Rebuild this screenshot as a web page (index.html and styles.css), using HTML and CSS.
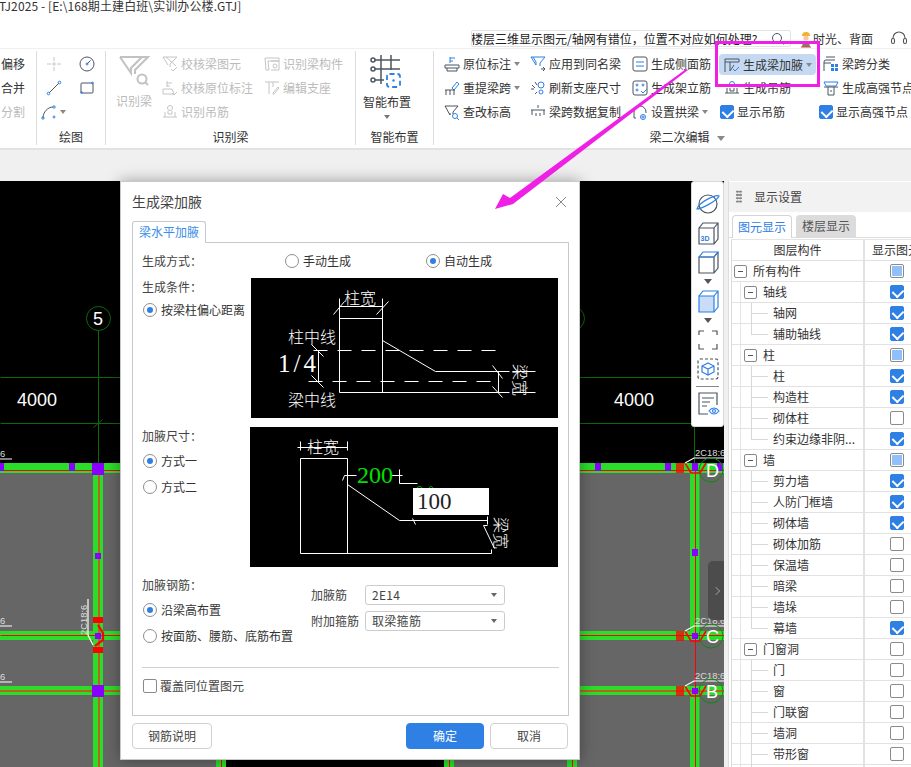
FILE: index.html
```html
<!DOCTYPE html>
<html lang="zh-CN">
<head>
<meta charset="utf-8">
<title>生成梁加腋</title>
<link rel="stylesheet" href="styles.css">
</head>
<body>
<div class="app">
  <header class="titlebar">
    <div class="title">TJ2025 - [E:\168期土建白班\实训办公楼.GTJ]</div>
    <div class="topline">
      <div class="search"><span class="search-text">楼层三维显示图元/轴网有错位，位置不对应如何处理?</span>
        <svg class="ic search-ic" viewBox="0 0 16 16"><circle cx="7" cy="7" r="4.5"/><path d="M10.5 10.5l3 3"/></svg>
      </div>
      <svg class="avatar" viewBox="0 0 12 18"><path d="M2 6a4 4 0 0 1 8 0z" fill="#f0b030"/><circle cx="6" cy="8" r="2.6" fill="#f3c9a0"/><path d="M2 17l1-6h6l1 6z" fill="#8d7b68"/><path d="M1 17h10" stroke="#c44" stroke-width="1"/></svg>
      <span class="user">时光、背面</span>
      <svg class="headset" viewBox="0 0 18 18"><path d="M3 10V8a6 6 0 0 1 12 0v2"/><rect x="1.5" y="8.5" width="3" height="5" rx="1.4"/><rect x="13.5" y="8.5" width="3" height="5" rx="1.4"/></svg>
    </div>
  </header>

  <section class="ribbon">
    <div class="group g1">
      <div class="body col-text">
        <div class="item">偏移</div>
        <div class="item">合并</div>
        <div class="item off">分割</div>
      </div>
      <div class="label"></div>
    </div>

    <div class="group g2">
      <div class="body draw-grid">
        <span class="cell"><svg class="ic" viewBox="0 0 16 16"><path class="grey" d="M8 1v4M8 11v4M1 8h4M11 8h4"/><circle class="grey" cx="8" cy="8" r="1.2"/></svg></span>
        <span class="cell"><svg class="ic big16" viewBox="0 0 16 16"><circle cx="8" cy="8" r="7"/><path d="M8 8l3.5-3.5"/><circle class="b" cx="8" cy="8" r="1"/></svg></span>
        <span class="cell"><svg class="ic" viewBox="0 0 16 16"><path d="M3 13L13 3"/><circle class="b" cx="2.5" cy="13.5" r="1.3"/><circle class="b" cx="13.5" cy="2.5" r="1.3"/></svg></span>
        <span class="cell"><svg class="ic" viewBox="0 0 16 16"><rect x="2" y="3" width="12" height="10" rx="1"/><circle class="b" cx="13.5" cy="3" r=".9"/><circle class="b" cx="2.5" cy="12.5" r=".9"/></svg></span>
        <span class="cell"><svg class="ic" viewBox="0 0 16 16"><path d="M2 14C2 8 7 3 12 3"/><circle class="b" cx="2" cy="14" r="1.2"/><circle class="b" cx="13" cy="3" r="1.2"/><circle class="b" cx="13" cy="13" r="1"/></svg><i class="caret"></i></span>
      </div>
      <div class="label">绘图</div>
    </div>

    <div class="group g3">
      <div class="body row-cols">
        <div class="bigcol off w56">
          <svg class="bigicon" viewBox="0 0 32 32"><path class="grey2" d="M2 2h28L17 15v4M2 2l11 16v-5L24 2M13 13v5"/><circle class="grey2" cx="24" cy="24" r="4.5"/><path class="grey2" d="M27 27l3 3"/></svg>
          <span>识别梁</span>
        </div>
        <div class="col w102 off">
          <div class="item"><svg class="ic grey" viewBox="0 0 16 16"><path d="M1 1h14L8 8v3M1 1l5 8M4 1l10 9M9 13l2 2 4-4"/></svg>校核梁图元</div>
          <div class="item"><svg class="ic grey" viewBox="0 0 16 16"><path d="M5 1v6M5 3h5M5 6h3M1 9h9l2 5H1zM10 13l2 2 3-3"/></svg>校核原位标注</div>
          <div class="item"><svg class="ic grey" viewBox="0 0 16 16"><circle cx="8" cy="4" r="2.5"/><path d="M1 13h14M3 13V8M13 13V8M6 7v3h4V7"/></svg>识别吊筋</div>
        </div>
        <div class="col off">
          <div class="item"><svg class="ic grey" viewBox="0 0 16 16"><path d="M1 2h14v3H4l1 9H2zM7 5h8v9H7"/><circle cx="11" cy="10" r="2"/></svg>识别梁构件</div>
          <div class="item"><svg class="ic grey" viewBox="0 0 16 16"><path d="M1 2h14M5 2v12M9 2v5M9 13l5-6 1 1-5 6H9z"/></svg>编辑支座</div>
        </div>
      </div>
      <div class="label">识别梁</div>
    </div>

    <div class="group g4">
      <div class="body">
        <div class="bigcol w62">
          <svg class="bigicon tall" viewBox="0 0 32 33"><g class="grid-lines"><circle cx="3" cy="5" r="2"/><circle cx="3" cy="14" r="2"/><circle cx="3" cy="25" r="2"/><path d="M5 5h25M5 14h25M5 25h9M11 0v29M21 0v15"/></g><rect class="dash" x="17" y="19" width="13" height="13" rx="2.5"/><circle cx="23.5" cy="25.5" r="1.2" fill="#2f80e4"/></svg>
          <span>智能布置</span>
          <i class="caret down"></i>
        </div>
      </div>
      <div class="label">智能布置</div>
    </div>

    <div class="group g5">
      <div class="body row-cols">
        <div class="col w86">
          <div class="item"><svg class="ic" viewBox="0 0 16 16"><path class="b" d="M6 1v6M6 2h5M6 5h3"/><path d="M1 9h14v3H1zM3 12v3h10v-3"/></svg>原位标注<i class="caret"></i></div>
          <div class="item"><svg class="ic" viewBox="0 0 16 16"><path class="b" d="M8 8l5-6 2 2-5 6z"/><path d="M1 10h10M2 10v5M10 10v5M6 10v5"/></svg>重提梁跨<i class="caret"></i></div>
          <div class="item"><svg class="ic" viewBox="0 0 16 16"><path d="M1 2h13L9 8v2M1 2l5 9v-2"/><circle class="b" cx="11" cy="12" r="2.5"/><path class="b" d="M13 14l2 2"/></svg>查改标高</div>
        </div>
        <div class="col w102">
          <div class="item"><svg class="ic" viewBox="0 0 16 16"><path class="b" d="M1 1h14l-5 6v3M1 1l5 8v-3"/><path class="b" d="M3 1l3 5"/><path d="M11 13h4M13 11l2 2-2 2"/></svg>应用到同名梁</div>
          <div class="item"><svg class="ic" viewBox="0 0 16 16"><path d="M2 5l3 3M5 2l2 3M1 9h3M7 12l-2 2"/><circle class="b" cx="11" cy="5" r="3"/><circle class="b" cx="11" cy="12" r="2"/></svg>刷新支座尺寸</div>
          <div class="item"><svg class="ic" viewBox="0 0 16 16"><path d="M1 6h14M8 1v3M2 6v5M14 6v5M6 9v3M10 9v3"/></svg>梁跨数据复制</div>
        </div>
        <div class="col w87">
          <div class="item"><svg class="ic" viewBox="0 0 16 16"><rect x="1" y="1" width="14" height="14" rx="2"/><path class="b" d="M4 6h8M4 10h8"/></svg>生成侧面筋</div>
          <div class="item"><svg class="ic" viewBox="0 0 16 16"><rect x="1" y="1" width="14" height="14" rx="2"/><g class="bdots"><circle cx="5" cy="5" r="1"/><circle cx="11" cy="5" r="1"/><circle cx="5" cy="10" r="1"/></g><path class="b" d="M9 11l2 2 4-4"/></svg>生成架立筋</div>
          <div class="item"><svg class="ic" viewBox="0 0 16 16"><path d="M2 14V8a6 6 0 0 1 12 0v1M2 14h2"/><circle class="b" cx="11" cy="13" r="2.5"/><circle class="b" cx="11" cy="13" r="1"/></svg>设置拱梁<i class="caret"></i></div>
        </div>
        <div class="col w99">
          <div class="item hl"><svg class="ic" viewBox="0 0 16 16"><path d="M1 2h14v3H1zM1 5v10M6 5v9l4-6"/><path class="b" d="M9 12l2 2 4-4"/></svg>生成梁加腋<i class="caret"></i></div>
          <div class="item pad5"><svg class="ic" viewBox="0 0 16 16"><circle class="b" cx="8" cy="4" r="2.5"/><path d="M1 13h14M3 13V8M13 13V8M6 8v3h4V8"/></svg>生成吊筋</div>
          <div class="item chk"><span class="cb on"></span>显示吊筋</div>
        </div>
        <div class="col">
          <div class="item pad5"><svg class="ic" viewBox="0 0 16 16"><path d="M1 15V6a2 2 0 0 1 2-2h9M1 7h7M3 1h9"/><path class="bfill" d="M8 8h3v3H8zM12 8h3v3h-3zM8 12h3v3H8zM12 12h3v3h-3z"/></svg>梁跨分类</div>
          <div class="item pad5"><svg class="ic" viewBox="0 0 16 16"><path class="b" d="M1 2h14l-2 4H3z"/><path d="M1 7h14M5 7v8h6V7M7 11h2"/></svg>生成高强节点</div>
          <div class="item chk"><span class="cb on"></span>显示高强节点</div>
        </div>
      </div>
      <div class="label">梁二次编辑<i class="caret big"></i></div>
    </div>
  </section>

  <div class="strip"></div>

  <main class="workspace">
    <div class="canvas">
      <svg class="cad" viewBox="0 181 724 586" preserveAspectRatio="none">
        <rect x="0" y="181" width="724" height="282" fill="#000"/>
        <rect x="0" y="463" width="724" height="304" fill="#666"/>
        <rect x="226" y="745" width="218" height="22" fill="#000"/>

        <g class="axis-thin" transform="translate(.5 .5)">
          <path d="M0 377H692M0 423H692M98 330V463M694 330V463M93 427l9-8M691 427l7-7"/>
          <circle cx="98" cy="318" r="12"/><circle cx="704" cy="318" r="12"/><circle cx="572" cy="318" r="12"/>
        </g>
        <text class="cad-num" x="17" y="406">4000</text>
        <text class="cad-num" x="614" y="406">4000</text>
        <text class="axis-label" x="93" y="325">5</text>

        <g class="beam">
          <rect x="0" y="463" width="724" height="10"/>
          <rect x="0" y="631" width="724" height="9"/>
          <rect x="0" y="686" width="724" height="9"/>
          <rect x="93" y="463" width="10" height="304"/>
          <rect x="690" y="463" width="9.500" height="177"/>
          <rect x="690" y="686" width="9.500" height="81"/>
          <rect x="216" y="686" width="10" height="81"/>
          <rect x="444" y="686" width="10" height="81"/>
          <rect x="567" y="686" width="10" height="81"/>
        </g>
        <path class="red" transform="translate(.5 .5)" d="M0 470H724M0 635H724M695 463V767M221 740V767M449 740V767M572 740V767"/>
        <path class="brown" d="M0 691H724M99 473V767"/>

        <g class="purple">
          <rect x="0" y="463" width="4" height="8"/><rect x="69" y="463" width="6" height="8"/>
          <rect x="92" y="463" width="12" height="12"/><rect x="95" y="553" width="6" height="6"/>
          <rect x="95" y="633" width="6" height="6"/><rect x="92" y="685" width="12" height="12"/>
          <rect x="595" y="463" width="6" height="8"/><rect x="665" y="463" width="6" height="8"/>
          <rect x="692" y="463" width="6" height="8"/><rect x="717" y="463" width="6" height="8"/>
          <rect x="692" y="549" width="6" height="7"/><rect x="692" y="633" width="6" height="6"/>
          <rect x="692" y="688" width="6" height="6"/>
        </g>

        <path class="leader" d="M0 459H12M0 626H12M0 682H12M88 599V635L93 645"/>
        <text class="dim-small" x="0" y="457">6</text>
        <text class="dim-small" x="0" y="624">6</text>
        <text class="dim-small" x="0" y="680">6</text>
        <text class="dim-small" transform="translate(87 635) rotate(-90)">2C18:6</text>
        <path class="rebar thick" d="M93 618H103M93 620H103M93 622H103M93 648H103M93 650H103M93 652H103M98 625L103 633V640L95 646"/>

        <g class="junction">
          <path class="rebar" d="M677 463V473M679 463V473M681 463V473M683 463V473M685 463L691 473H700L706 463"/>
          <path class="leader" d="M685 463L694 458H724"/>
          <text class="dim-small" x="695" y="456">2C18:6</text>
          <circle class="axis-c" cx="711" cy="470" r="12"/>
          <text class="axis-letter" x="706" y="477">D</text>
        </g>
        <g class="junction">
          <path class="rebar" d="M677 631V641M679 631V641M681 631V641M683 631V641M685 631L691 641H700L706 631"/>
          <path class="leader" d="M685 631L694 626H724"/>
          <text class="dim-small" x="695" y="624">2C18:6</text>
          <circle class="axis-c" cx="711" cy="636" r="12"/>
          <text class="axis-letter" x="706" y="643">C</text>
        </g>
        <g class="junction">
          <path class="rebar" d="M677 686V696M679 686V696M681 686V696M683 686V696M685 686L691 696H700L706 686"/>
          <path class="leader" d="M685 686L694 681H724"/>
          <text class="dim-small" x="695" y="679">2C18:6</text>
          <circle class="axis-c" cx="711" cy="691" r="12"/>
          <text class="axis-letter" x="706" y="698">B</text>
        </g>
      </svg>
      <div class="collapse-tab"><i class="chev"></i></div>
    </div>

    <aside class="panel">
      <div class="panel-head"><span class="grip"></span>显示设置</div>
      <div class="tabs">
        <span class="ptab active">图元显示</span>
        <span class="ptab">楼层显示</span>
      </div>
      <div class="table">
        <div class="row head"><div class="tree">图层构件</div><div class="vis">显示图元</div></div>
        <div class="row lv0"><div class="tree"><i class="exp"></i>所有构件</div><div class="vis"><span class="cb part"></span></div></div>
        <div class="row lv1"><div class="tree"><i class="exp"></i>轴线</div><div class="vis"><span class="cb on"></span></div></div>
        <div class="row lv2"><div class="tree">轴网</div><div class="vis"><span class="cb on"></span></div></div>
        <div class="row lv2 last"><div class="tree">辅助轴线</div><div class="vis"><span class="cb on"></span></div></div>
        <div class="row lv1"><div class="tree"><i class="exp"></i>柱</div><div class="vis"><span class="cb part"></span></div></div>
        <div class="row lv2"><div class="tree">柱</div><div class="vis"><span class="cb on"></span></div></div>
        <div class="row lv2"><div class="tree">构造柱</div><div class="vis"><span class="cb on"></span></div></div>
        <div class="row lv2"><div class="tree">砌体柱</div><div class="vis"><span class="cb"></span></div></div>
        <div class="row lv2 last"><div class="tree">约束边缘非阴...</div><div class="vis"><span class="cb on"></span></div></div>
        <div class="row lv1"><div class="tree"><i class="exp"></i>墙</div><div class="vis"><span class="cb part"></span></div></div>
        <div class="row lv2"><div class="tree">剪力墙</div><div class="vis"><span class="cb on"></span></div></div>
        <div class="row lv2"><div class="tree">人防门框墙</div><div class="vis"><span class="cb on"></span></div></div>
        <div class="row lv2"><div class="tree">砌体墙</div><div class="vis"><span class="cb on"></span></div></div>
        <div class="row lv2"><div class="tree">砌体加筋</div><div class="vis"><span class="cb"></span></div></div>
        <div class="row lv2"><div class="tree">保温墙</div><div class="vis"><span class="cb"></span></div></div>
        <div class="row lv2"><div class="tree">暗梁</div><div class="vis"><span class="cb"></span></div></div>
        <div class="row lv2"><div class="tree">墙垛</div><div class="vis"><span class="cb"></span></div></div>
        <div class="row lv2 last"><div class="tree">幕墙</div><div class="vis"><span class="cb on"></span></div></div>
        <div class="row lv1"><div class="tree"><i class="exp"></i>门窗洞</div><div class="vis"><span class="cb"></span></div></div>
        <div class="row lv2"><div class="tree">门</div><div class="vis"><span class="cb"></span></div></div>
        <div class="row lv2"><div class="tree">窗</div><div class="vis"><span class="cb"></span></div></div>
        <div class="row lv2"><div class="tree">门联窗</div><div class="vis"><span class="cb"></span></div></div>
        <div class="row lv2"><div class="tree">墙洞</div><div class="vis"><span class="cb"></span></div></div>
        <div class="row lv2"><div class="tree">带形窗</div><div class="vis"><span class="cb"></span></div></div>
        <div class="row lv2"><div class="tree"></div><div class="vis"></div></div>
      </div>
    </aside>
  </main>

  <div class="viewbar">
    <svg class="vb" viewBox="0 0 24 24"><circle class="st" cx="12" cy="12" r="9"/><path class="sb" d="M1 17C5 17 21 9 23 4 20 2 3 10 1 17z"/></svg>
    <svg class="vb" viewBox="0 0 24 24"><path class="st" d="M3 7h15v16H3zM3 7l4-5h15v16l-4 5M18 7l4-5"/><text class="t3d" x="4.500" y="20">3D</text></svg>
    <svg class="vb" viewBox="0 0 24 24"><path class="st" d="M3 7h15v16H3zM18 23l4-5V2M18 7l4-5"/><path class="sb" d="M3 7l4-5h15l-4 5z"/></svg>
    <i class="vb-caret"></i>
    <svg class="vb" viewBox="0 0 24 24"><path class="sb solid" d="M3 7h15v16H3z"/><path class="sb" d="M3 7l4-5h15v16l-4 5M18 7l4-5"/></svg>
    <i class="vb-caret"></i>
    <svg class="vb" viewBox="0 0 24 24"><path class="st" d="M3 7V3h5M16 3h5v4M21 16v5h-5M8 21H3v-5"/></svg>
    <svg class="vb" viewBox="0 0 24 24"><rect class="st dash2" x="2" y="2" width="20" height="20" rx="2"/><path class="sb" d="M12 6l6 3v6l-6 3-6-3V9zM6 9l6 3 6-3M12 12v6"/></svg>
    <span class="vb-rule"></span>
    <svg class="vb" viewBox="0 0 24 24"><path class="st" d="M21 14V2H3v21h9M6 7h12M6 11h8M6 15h5"/><path class="sb" d="M13 20c3-4 7-4 10 0-3 4-7 4-10 0z"/><circle class="sb" cx="18" cy="20" r="1.500"/></svg>
  </div>

  <div class="dialog">
    <div class="dlg-head"><span class="dlg-title">生成梁加腋</span><svg class="close" viewBox="0 0 12 12"><path d="M1 1l10 10M11 1L1 11"/></svg></div>
    <div class="dlg-tab">梁水平加腋</div>
    <div class="dlg-box">
      <div class="method">
        <span class="lbl w143">生成方式：</span>
        <label class="radio w141"><i class="rd"></i>手动生成</label>
        <label class="radio"><i class="rd on"></i>自动生成</label>
      </div>

      <div class="sect s1">
        <div class="sect-left">
          <div class="lbl">生成条件：</div>
          <label class="radio r-first"><i class="rd on"></i>按梁柱偏心距离</label>
        </div>
        <svg class="diagram" viewBox="0 0 307 140">
          <g class="cadline" transform="translate(.5 .5)">
            <path d="M88 40H131M88 20V114M131 20V114M88 28H131M82 36L93 23M125 36L137 23"/>
            <path d="M131 62L184 93H258M88 114H258M67 72V103M60 66L72 78M60 97L72 109"/>
            <path class="dashed" d="M62 72H253M57 103H241"/>
            <path d="M247 93V114M241 87L251 100M241 108L251 119M261 93H284M261 114H284"/>
          </g>
          <text class="cadtxt" x="93" y="26">柱宽</text>
          <text class="cadtxt" x="37" y="65">柱中线</text>
          <text class="cadfrac" x="27" y="94">1/4</text>
          <text class="cadtxt" x="37" y="128">梁中线</text>
          <text class="cadtxt side" transform="translate(263 86) rotate(90)">梁宽</text>
        </svg>
      </div>

      <div class="sect s2">
        <div class="sect-left lm">
          <div class="lbl">加腋尺寸：</div>
          <label class="radio r-first2"><i class="rd on"></i>方式一</label>
          <label class="radio r-next"><i class="rd"></i>方式二</label>
        </div>
        <svg class="diagram" viewBox="0 0 308 140">
          <g class="cadline" transform="translate(.5 .5)">
            <path d="M50 31H97M50 31V126M97 31V126M50 20H97M50 14V23M97 14V23M47 20h3"/>
            <path d="M97 57L149 93H237M50 126H241M241 126V122M237 89V97M233 98H237M233 98L244 121"/>
            <path d="M94 48H106M141 48H152M149 42V56H167M94 48l-2 5M162 91l3 6"/>
          </g>
          <text class="cadtxt" x="57" y="26">柱宽</text>
          <text class="cadgreen" x="107" y="56">200</text>
          <path class="greenarc" d="M167 61c1-2 4-2 5 0M183 61c-1-2-3-2-4 0"/>
          <rect x="163" y="61" width="76" height="27" fill="#fff"/>
          <text class="cadbox" x="167" y="82">100</text>
          <text class="cadtxt side" transform="translate(245 90) rotate(90)">梁宽</text>
        </svg>
      </div>

      <div class="sect s3">
        <div class="sect-left wide">
          <div class="lbl">加腋钢筋：</div>
          <label class="radio r-first3"><i class="rd on"></i>沿梁高布置</label>
          <label class="radio r-next"><i class="rd"></i>按面筋、腰筋、底筋布置</label>
        </div>
        <div class="fields">
          <div class="field"><span class="field-lbl">加腋筋</span><span class="select">2E14<i class="caret"></i></span></div>
          <div class="field"><span class="field-lbl">附加箍筋</span><span class="select">取梁箍筋<i class="caret"></i></span></div>
        </div>
      </div>

      <div class="rule"></div>
      <label class="cover"><span class="cb sq"></span>覆盖同位置图元</label>
    </div>
    <div class="dlg-foot">
      <button class="btn w80">钢筋说明</button>
      <span class="spacer"></span>
      <button class="btn primary w78">确定</button>
      <button class="btn w78">取消</button>
    </div>
  </div>

  <div class="callout"></div>
  <svg class="arrow" viewBox="0 0 911 767"><polygon points="688,70 513,204 495,209 503,194 510,198 686,69"/></svg>
</div>
</body>
</html>
```

FILE: styles.css
```css
* { box-sizing: border-box; }
html, body { margin: 0; padding: 0; }
body {
  width: 911px; height: 767px; overflow: hidden; background: #fff;
  font: 12px/16px "Noto Sans CJK SC", "Liberation Sans", sans-serif; color: #333;
}
i { font-style: normal; display: inline-block; }
.app { position: relative; width: 911px; height: 767px; overflow: hidden; display: flex; flex-direction: column; }

/* title bar */
.titlebar { height: 48px; flex: none; padding-top: 0; background: #fff; }
.title { height: 30px; line-height: 12px; letter-spacing: .1px; white-space: nowrap; margin-left: -1px; }
.topline { display: flex; align-items: center; height: 17px; padding-left: 471px; }
.search {
  width: 320px; height: 17px; border: 1px solid #e3e3e3; border-radius: 2px; display: flex; align-items: center;
  justify-content: space-between; overflow: hidden; padding-right: 4px; margin-right: 9px;
}
.search-text { color: #222; white-space: nowrap; line-height: 15px; margin-left: -1px; }
.search-ic { width: 12px; height: 12px; flex: none; stroke: #aaa; }
.avatar { width: 12px; height: 18px; flex: none; }
.user { margin-left: 1px; width: 77px; color: #333; }
.headset { width: 18px; height: 18px; flex: none; fill: #fff; stroke: #555; stroke-width: 1.100; }

/* ribbon */
.ribbon {
  height: 102px; flex: none; display: flex; padding-top: 2px; background: #fff;
  border-top: 1px solid #f0f0f0; border-bottom: 2px solid #e2e2e2; overflow: hidden;
}
.group { height: 94px; flex: none; border-right: 1px solid #dcdcdc; display: flex; flex-direction: column; }
.g1 { width: 37px; }
.g2 { width: 69px; }
.g3 { width: 250px; }
.g4 { width: 78px; }
.g5 { width: 496px; border-right: 0; padding-left: 10px; }
.body { height: 79px; flex: none; padding-top: 1px; display: flex; }
.col-text { flex-direction: column; padding-left: 1px; }
.label { height: 15px; line-height: 14px; text-align: center; white-space: nowrap; color: #333; }
.item { height: 24px; display: flex; align-items: center; white-space: nowrap; color: #333; gap: 3px; }
.off, .off .item { color: #bbb; }
.row-cols { flex-direction: row; }
.col { display: flex; flex-direction: column; }
.w56 { width: 56px; } .w62 { width: 62px; }
.w86 { width: 86px; } .w87 { width: 87px; } .w99 { width: 99px; } .w102 { width: 102px; }
.bigcol { display: flex; flex-direction: column; align-items: center; padding-top: 3px; }
.bigcol span { margin-top: 6px; }
.bigicon { width: 32px; height: 32px; fill: none; }
.bigicon.tall { height: 33px; margin-left: -2px; }
.bigcol span { line-height: 16px; }
.grey2 { stroke: #c2c2c2; stroke-width: 2; fill: none; }
.grid-lines { stroke: #4b5563; stroke-width: 1.500; fill: none; }
.dash { stroke: #2f80e4; stroke-width: 1.800; stroke-dasharray: 5 3; fill: none; }

.ic { width: 16px; height: 16px; flex: none; fill: none; stroke: #4b5563; stroke-width: 1; }
.ic .b, .b { stroke: #2f80e4; fill: none; }
.ic.grey, .ic .grey { stroke: #c4c4c4; }
.bdots { stroke: #2f80e4; }
.bfill { fill: #2f80e4; stroke: none; }

.draw-grid { display: grid; grid-template-columns: 33px 33px; grid-auto-rows: 24px; padding: 1px 0 0 0; margin-left: 0; align-content: start; }
.cell { display: flex; align-items: center; justify-content: center; gap: 3px; position: relative; }
.big16 { width: 16px; height: 16px; }

.caret { width: 0; height: 0; border: 3px solid transparent; border-top: 4px solid #888; border-bottom: 0; flex: none; }
.caret.down { margin: 5px 0 0; border-top-color: #777; }
.caret.big { margin-left: 7px; border-width: 4px; border-top-width: 5px; border-bottom: 0; vertical-align: 1px; }
.hl { width: 97px; height: 21px; margin: 2px 0 1px; padding-left: 5px; background: #c5daf2; border-radius: 4px; }
.pad5 { padding-left: 5px; }
.chk { padding-left: 1px; gap: 3px; }

/* shared checkbox */
.cb { width: 14px; height: 14px; flex: none; display: inline-block; position: relative; border: 1px solid #8a8a8a; border-radius: 2px; background: #fff; }
.cb.on { background: #2f80e4; border-color: #2f80e4; }
.cb.on::after {
  content: ""; position: absolute; left: 3px; top: 1px; width: 6px; height: 8px;
  border: solid #fff; border-width: 0 2px 2px 0; transform: rotate(45deg);
}
.cb.part::after { content: ""; position: absolute; inset: 1px; background: #90c0fb; }

.strip { height: 31px; flex: none; background: #f0f0f0; }

/* workspace */
.workspace { flex: 1; display: flex; min-height: 0; background: #f0f0f0; }
.canvas { width: 724px; flex: none; position: relative; overflow: hidden; }
.cad { display: block; width: 724px; height: 586px; }
.axis-thin { stroke: #0a6a0a; stroke-width: 1; fill: none; }
.cad-num { font: 18px "Liberation Sans", sans-serif; fill: #fff; }
.axis-label { font: 18px "Liberation Sans", sans-serif; fill: #fff; }
.beam rect { fill: #2bdc2b; }
.red { stroke: #f00; stroke-width: 1; fill: none; }
.brown { stroke: #b5651d; stroke-width: 2; fill: none; }
.purple rect { fill: #8a00ff; }
.leader { stroke: #fff; stroke-width: 1.200; fill: none; }
.dim-small { font: 9.400px "Liberation Sans", sans-serif; fill: #ddd; }
.rebar { stroke: #f00; stroke-width: 1.500; fill: none; }
.rebar.thick { stroke-width: 2.200; }
.axis-c { fill: none; stroke: #0f8a0f; stroke-width: 1; }
.axis-letter { font: 18px "Liberation Sans", sans-serif; fill: #fff; }
.collapse-tab {
  position: absolute; right: 0; top: 380px; width: 16px; height: 59px;
  background: #4c4c4c; border-radius: 5px 0 0 5px; display: flex; align-items: center; justify-content: center;
}
.chev { width: 6px; height: 6px; border: solid #8a8a8a; border-width: 1px 1px 0 0; transform: rotate(45deg); }

/* right panel */
.panel { flex: 1; margin-left: 4px; background: #fff; border-left: 1px solid #dedede; overflow: hidden; padding-top: 1px; }
.panel-head { height: 30px; background: #f2f2f2; display: flex; align-items: center; padding-left: 25px; position: relative; color: #444; }
.grip {
  position: absolute; left: 7px; top: 8px; width: 6px; height: 13px;
  background: radial-gradient(circle, #888 1.100px, transparent 1.300px) 0 0 / 3px 3.300px;
}
.tabs { display: flex; gap: 4px; height: 26px; padding: 3px 0 0 3px; border-bottom: 1px solid #dcdcdc; }
.ptab { width: 60px; height: 23px; line-height: 22px; text-align: center; background: #dcdcdc; border-radius: 4px 4px 0 0; color: #555; }
.ptab.active { background: #fff; color: #2f80e4; border: 1px solid #d4d4d4; border-bottom: 0; }
.table { margin-left: 2px; border-left: 1px solid #dcdcdc; margin-top: 1px; border-top: 1px solid #e4e4e4; width: 260px; }
.row { display: flex; height: 21px; border-bottom: 1px solid #e2e2e2; }
.tree { width: 133px; flex: none; position: relative; border-right: 2px solid #e2e2e2; display: flex; align-items: center; white-space: nowrap; color: #333; }
.vis { flex: 1; display: flex; align-items: center; padding-left: 25px; color: #333; white-space: nowrap; }
.head .tree { justify-content: center; }
.head .vis { padding-left: 7px; }
.exp { width: 13px; height: 13px; border: 1px solid #888; border-radius: 2px; position: relative; flex: none; }
.exp::after { content: ""; position: absolute; left: 3px; right: 3px; top: 5px; height: 1px; background: #555; }
.lv0 .tree { padding-left: 2px; gap: 6px; }
.lv1 .tree { padding-left: 12px; gap: 6px; }
.lv2 .tree { padding-left: 41px; }
.lv1 .tree, .lv2 .tree { background: linear-gradient(#e6e6e6, #e6e6e6) 8px 0 / 1px 100% no-repeat; }
.lv2 .tree::before {
  content: ""; position: absolute; left: 19px; top: 0; width: 16px; height: 10px;
  border: solid #d8d8d8; border-width: 0 0 1px 1px;
}
.lv2:not(.last) .tree::after { content: ""; position: absolute; left: 19px; top: 10px; height: 11px; border-left: 1px solid #d8d8d8; }

/* vertical view toolbar */
.viewbar {
  position: absolute; left: 691px; top: 181px; width: 33px; height: 246px; background: #fff;
  border: 1px solid #d8d8d8; border-radius: 3px; display: flex; flex-direction: column; align-items: center; padding-top: 10px;
}
.vb { width: 24px; height: 24px; flex: none; margin-bottom: 5px; }
.st { stroke: #4b5563; fill: none; stroke-width: 1.200; }
.sb { stroke: #2f80e4; fill: none; stroke-width: 1.200; }
.sb.solid { fill: #c9ddf8; }
.dash2 { stroke-dasharray: 3 2; }
.t3d { font: bold 7px "Liberation Sans", sans-serif; fill: #2f80e4; }
.vb-caret { width: 0; height: 0; border: 4px solid transparent; border-top: 5px solid #555; border-bottom: 0; margin: 0 0 5px; }
.vb-rule { width: 23px; height: 1px; background: #888; margin: 0 0 4px; flex: none; }

/* dialog */
.dialog {
  position: absolute; left: 120px; top: 181px; width: 460px; height: 579px; background: #fff;
  border: 1px solid #c8c8c8; box-shadow: 0 0 14px rgba(0,0,0,.35); padding: 0 11px 0 11px;
}
.dlg-head { height: 39px; display: flex; align-items: center; justify-content: space-between; padding-right: 1px; }
.dlg-title { font-size: 14px; color: #444; margin-top: -2px; }
.close { width: 12px; height: 12px; fill: none; stroke: #888; stroke-width: 1; }
.dlg-tab {
  width: 74px; height: 22px; line-height: 20px; text-align: center; color: #3a8ee6; background: #fff; position: relative;
  border: 1px solid #c8c8d0; border-bottom: 0; border-radius: 3px 3px 0 0; z-index: 1; margin-bottom: -1px;
}
.dlg-box { width: 437px; height: 474px; border: 1px solid #c8c8d0; padding: 0 9px; }
.lbl { color: #444; line-height: 20px; white-space: nowrap; }
.method { display: flex; align-items: center; height: 20px; margin-top: 8px; }
.w143 { width: 143px; }
.w141 { width: 141px; }
.radio { display: flex; align-items: center; gap: 4px; line-height: 20px; white-space: nowrap; color: #333; }
.rd { width: 14px; height: 14px; border: 1px solid #8e8e8e; border-radius: 50%; background: #fff; position: relative; flex: none; }
.rd.on::after { content: ""; position: absolute; left: 3px; top: 3px; width: 6px; height: 6px; border-radius: 50%; background: #2f80e4; }
.sect { display: flex; }
.s1 { margin-top: 7px; height: 140px; }
.s2 { margin-top: 9px; height: 140px; }
.s3 { margin-top: 8px; height: 85px; }
.sect-left { width: 109px; flex: none; padding-left: 0; }
.sect-left .radio { margin-left: 1px; }
.sect-left.lm { width: 108px; }
.sect-left.wide { width: 169px; }
.r-first { margin-top: 3px; }
.r-first2 { margin-top: 5px; }
.r-first3 { margin-top: 5px; }
.r-next { margin-top: 6px; }
.s1 .sect-left .lbl { margin-top: -1px; }
.s2 .sect-left .lbl { margin-top: -1px; }
.diagram { width: 307px; height: 140px; background: #000; flex: none; display: block; }
.s2 .diagram { width: 308px; }
.cadline { stroke: #fff; stroke-width: 1; fill: none; }
.dashed { stroke-dasharray: 14 10; }
.cadtxt { font: 300 16px "Noto Sans CJK SC", sans-serif; fill: #fff; }
.cadfrac { font: 25px "Liberation Serif", serif; fill: #fff; letter-spacing: 3px; }
.cadgreen { font: 24px "Liberation Serif", serif; fill: #00e000; }
.cadbox { font: 23px "Liberation Serif", serif; fill: #222; }
.greenarc { stroke: #00c000; fill: none; }
.fields { padding-top: 10px; display: flex; flex-direction: column; gap: 6px; }
.field { display: flex; align-items: center; height: 20px; }
.field-lbl { width: 54px; color: #444; }
.select { width: 140px; height: 20px; border: 1px solid #ccc; border-radius: 3px; display: flex; align-items: center; justify-content: space-between; padding: 0 7px 0 6px; color: #444; letter-spacing: .3px; }
.select .caret { border-top-color: #666; }
.rule { height: 1px; background: #d0d0d0; margin-top: 7px; }
.cover { display: flex; align-items: center; gap: 3px; margin-top: 11px; color: #444; height: 14px; margin-left: 1px; }
.cb.sq { width: 14px; height: 14px; border-radius: 2px; }
.dlg-foot { display: flex; gap: 6px; margin-top: 7px; }
.spacer { flex: 1; }
.btn { height: 26px; border: 1px solid #d0d0d0; border-radius: 4px; background: #fff; color: #444; font: inherit; padding: 0; }
.btn.primary { background: #2f80e4; border-color: #2f80e4; color: #fff; }
.w80 { width: 80px; } .w78 { width: 78px; }

/* annotations over the screenshot */
.callout { position: absolute; left: 715px; top: 41px; width: 105px; height: 46px; border: 3.500px solid #f01fe6; pointer-events: none; }
.arrow { position: absolute; left: 0; top: 0; width: 911px; height: 767px; pointer-events: none; }
.arrow polygon { fill: #f01fe6; }
```
